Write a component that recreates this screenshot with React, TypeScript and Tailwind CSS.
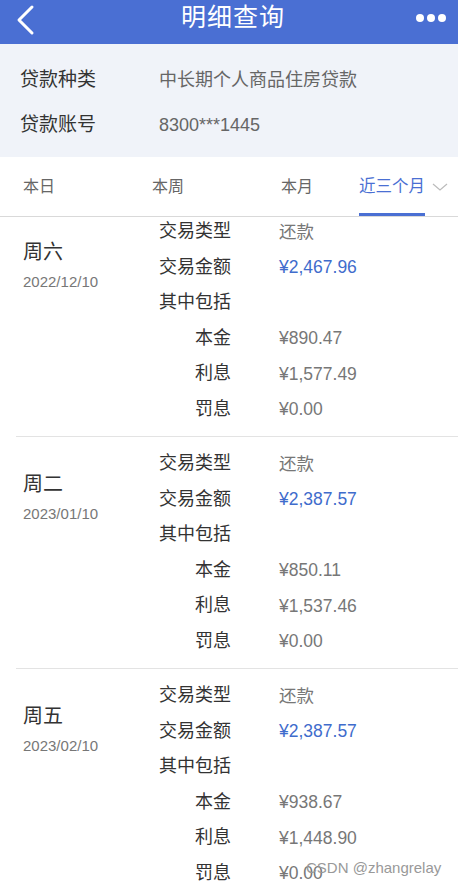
import React from 'react';

const records = [
    { day: '周六', date: '2022/12/10', amount: '¥2,467.96', principal: '¥890.47', interest: '¥1,577.49', penalty: '¥0.00' },
    { day: '周二', date: '2023/01/10', amount: '¥2,387.57', principal: '¥850.11', interest: '¥1,537.46', penalty: '¥0.00' },
    { day: '周五', date: '2023/02/10', amount: '¥2,387.57', principal: '¥938.67', interest: '¥1,448.90', penalty: '¥0.00' },
];

const font = { fontFamily: '"Liberation Sans", "Noto Sans CJK SC", sans-serif' };

const Row: React.FC<{ label: string; value?: string; blue?: boolean }> = ({ label, value, blue }) => (
    <div className="flex items-center h-[35.5px]">
        <div className="w-[72px] text-right text-[18px] text-[#333]">{label}</div>
        <div className={`ml-[48px] text-[17.5px] ${blue ? 'text-[#3f6ccc]' : 'text-[#777]'}`}>{value}</div>
    </div>
);

export default function App() {
    return (
        <div className="relative w-[458px] h-[886px] overflow-hidden bg-white" style={font}>
            {/* 顶部导航 */}
            <div className="h-[44px] bg-[#4a6fd3] flex items-center justify-between px-[14px]">
                <svg width="22" height="32" viewBox="0 0 22 32" className="-mt-[4px]">
                    <path d="M18 3 L5 16 L18 29" stroke="white" strokeWidth="3" fill="none" strokeLinecap="round" strokeLinejoin="round" />
                </svg>
                <div className="text-white text-[25px] -mt-[8px] ml-[14px] tracking-[1px]">明细查询</div>
                <div className="flex gap-[3px] -mt-[9px] mr-[-2px]">
                    <span className="w-[8px] h-[8px] rounded-full bg-white" />
                    <span className="w-[8px] h-[8px] rounded-full bg-white" />
                    <span className="w-[8px] h-[8px] rounded-full bg-white" />
                </div>
            </div>

            {/* 贷款信息 */}
            <div className="h-[113px] bg-[#f0f3f9] pt-[20px]">
                <div className="flex items-center h-[33px] pl-[20px]">
                    <div className="w-[139px] text-[19px] text-[#333]">贷款种类</div>
                    <div className="text-[18px] text-[#666]">中长期个人商品住房贷款</div>
                </div>
                <div className="flex items-center h-[33px] mt-[12px] pl-[20px]">
                    <div className="w-[139px] text-[19px] text-[#333]">贷款账号</div>
                    <div className="text-[18px] text-[#666]">8300***1445</div>
                </div>
            </div>

            {/* 时间筛选 */}
            <div className="h-[60px] flex items-stretch pl-[23px] border-b border-[#d9d9d9]">
                <div className="w-[129px] flex items-center text-[16px] text-[#666]">本日</div>
                <div className="w-[129px] flex items-center text-[16px] text-[#666]">本周</div>
                <div className="w-[78px] flex items-center text-[16px] text-[#666]">本月</div>
                <div className="flex items-center">
                    <div className="h-full flex items-center text-[16.5px] text-[#4a6fd3] border-b-[3px] border-[#4a6fd3] pt-[3px]">近三个月</div>
                    <svg width="16" height="10" viewBox="0 0 16 10" className="ml-[7px]">
                        <path d="M1 2 L8 8 L15 2" stroke="#bbb" strokeWidth="1.2" fill="none" />
                    </svg>
                </div>
            </div>

            {/* 明细列表 */}
            <div className="-mt-[12px]">
                {records.map((r) => (
                    <div key={r.date} className="ml-[16px] flex border-b border-[#e3e3e3] pt-[9px] pb-[9px]">
                        <div className="w-[143px] pl-[7px] pt-[24px]">
                            <div className="text-[20px] leading-[28px] text-[#333]">{r.day}</div>
                            <div className="mt-[6px] text-[15px] leading-[20px] text-[#777]">{r.date}</div>
                        </div>
                        <div>
                            <Row label="交易类型" value="还款" />
                            <Row label="交易金额" value={r.amount} blue />
                            <Row label="其中包括" />
                            <Row label="本金" value={r.principal} />
                            <Row label="利息" value={r.interest} />
                            <Row label="罚息" value={r.penalty} />
                        </div>
                    </div>
                ))}
            </div>

            <div className="absolute left-[306px] top-[857px] text-[15px] text-[#999]">CSDN @zhangrelay</div>
        </div>
    );
}
